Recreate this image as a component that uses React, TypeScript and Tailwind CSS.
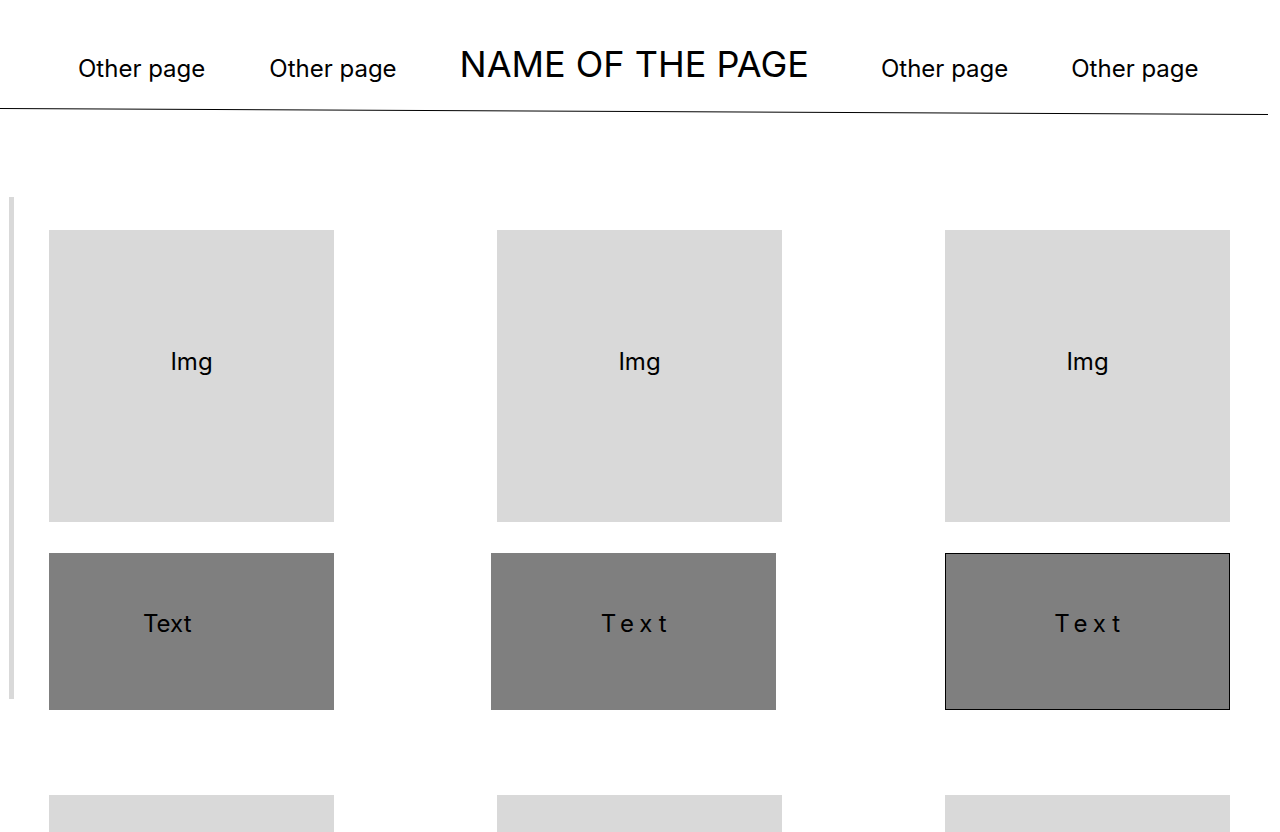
import React from "react";

const cards = [
  { text: "Text", textClass: "pt-[56px] pl-[94px]", boxClass: "" },
  { text: "Text", textClass: "pt-[56px] justify-center tracking-[0.24em] pl-[6px]", boxClass: "-ml-[6px]" },
  { text: "Text", textClass: "pt-[55px] justify-center tracking-[0.24em] pl-[5px] border border-black", boxClass: "" },
];

const App = () => {
  return (
    <div className="w-full h-[832px] overflow-hidden bg-white text-black font-['Inter',sans-serif]">
      {/* Header */}
      <header className="flex items-baseline pt-[42px] pl-[78px]">
        <a className="text-[24px] leading-[30px]">Other page</a>
        <a className="ml-[64px] text-[24px] leading-[30px]">Other page</a>
        <h1 className="ml-[63px] text-[36px] leading-[44px]">NAME OF THE PAGE</h1>
        <a className="ml-[72px] text-[24px] leading-[30px]">Other page</a>
        <a className="ml-[63px] text-[24px] leading-[30px]">Other page</a>
      </header>
      <svg className="block mt-[20px]" width="1280" height="10" viewBox="0 0 1280 10">
        <line x1="0" y1="2.5" x2="1268" y2="8.5" stroke="#000" strokeWidth="1" />
      </svg>

      {/* Gallery */}
      <main className="flex items-start">
        <div className="ml-[9px] mt-[81px] w-[5px] h-[502px] bg-[#d9d9d9]" />
        <div className="ml-[35px] mt-[114px] grid grid-cols-[285px_285px_285px] gap-x-[163px] gap-y-[85px]">
          {cards.map((card, i) => (
            <div key={i} className="flex flex-col gap-[31px]">
              <div className="h-[292px] bg-[#d9d9d9] flex justify-center pt-[117px] text-[24px] leading-[29px]">
                Img
              </div>
              <div className={`w-[285px] h-[157px] ${card.boxClass}`}>
                <div className={`h-full flex bg-[#7f7f7f] text-[24px] leading-[29px] ${card.textClass}`}>
                  {card.text}
                </div>
              </div>
            </div>
          ))}
          {/* next row, below the fold */}
          {cards.map((_, i) => (
            <div key={`next-${i}`} className="h-[292px] bg-[#d9d9d9]" />
          ))}
        </div>
      </main>
    </div>
  );
};

export default App;
